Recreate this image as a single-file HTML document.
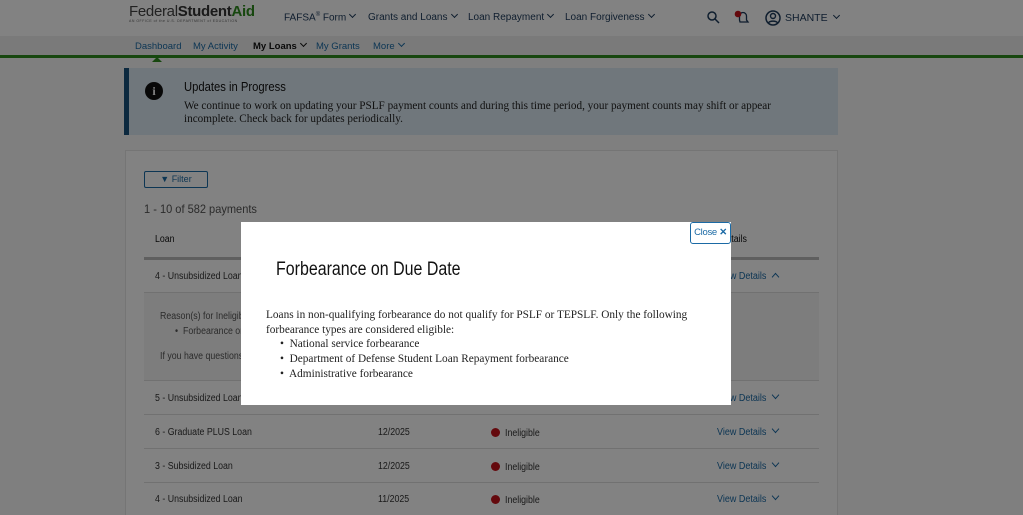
<!DOCTYPE html>
<html><head><meta charset="utf-8"><style>
*{margin:0;padding:0;box-sizing:border-box}
html,body{width:1023px;height:515px;overflow:hidden}
body{background:#fafafa;font-family:"Liberation Sans",sans-serif;position:relative;color:#222}
.abs{position:absolute;white-space:nowrap}
.hdr{position:absolute;left:0;top:0;width:1023px;height:36px;background:#fff}
.sub{position:absolute;left:0;top:36px;width:1023px;height:22px;background:#f0f0f0;border-bottom:3px solid #2e8b1e}
.nav{font-size:10px;color:#1d3a5a}
.sn{font-size:9.5px;color:#1b6aa5}
.cv{display:inline-block;width:5px;height:5px;border-right:1.3px solid currentColor;border-bottom:1.3px solid currentColor;transform:rotate(45deg);margin-left:4px;position:relative;top:-3px}
.cu{display:inline-block;width:6px;height:6px;border-left:1px solid currentColor;border-top:1px solid currentColor;transform:rotate(45deg);margin-left:7px;position:relative;top:1px}
.cd{display:inline-block;width:6px;height:6px;border-right:1px solid currentColor;border-bottom:1px solid currentColor;transform:rotate(45deg);margin-left:7px;position:relative;top:-3px}
.alert{position:absolute;left:124px;top:68px;width:714px;height:67px;background:#dce9f3;border-left:5px solid #19527d}
.card{position:absolute;left:125px;top:150px;width:713px;height:365px;background:#fff;border:1px solid #e6e6e6;border-bottom:none}
.t{font-size:10px;color:#333;transform:scaleX(.88);transform-origin:left}
.line{position:absolute;left:144px;width:675px;height:1px;background:#ddd}
.vd{font-size:10px;color:#1b6aa5;transform:scaleX(.9);transform-origin:left}
.dot{position:absolute;width:9px;height:9px;border-radius:50%;background:#c5121b}
.ov{position:absolute;left:0;top:0;width:1023px;height:515px;background:rgba(0,0,0,.49)}
.modal{position:absolute;left:241px;top:222px;width:490px;height:183px;background:#fff}
.serif{font-family:"Liberation Serif",serif;font-size:11.3px;color:#222}
</style></head><body>
<div class="hdr"></div>
<div class="abs" style="left:129px;top:3px;font-size:15px;color:#444;letter-spacing:-.3px">Federal<b style="color:#333">Student</b><b style="color:#2e8b1e">Aid</b></div>
<div class="abs" style="left:129px;top:19px;font-size:3.5px;color:#666;letter-spacing:.5px">AN OFFICE of the U.S. DEPARTMENT of EDUCATION</div>
<div class="abs nav" style="left:284px;top:12px">FAFSA<sup style="font-size:6px">®</sup> Form<span class="cv"></span></div>
<div class="abs nav" style="left:368px;top:12px">Grants and Loans<span class="cv"></span></div>
<div class="abs nav" style="left:468px;top:12px">Loan Repayment<span class="cv"></span></div>
<div class="abs nav" style="left:565px;top:12px">Loan Forgiveness<span class="cv"></span></div>
<svg class="abs" style="left:707px;top:11px" width="13" height="13" viewBox="0 0 13 13"><circle cx="5" cy="5" r="4" fill="none" stroke="#1d3a5a" stroke-width="1.5"/><path d="M8 8l4 4" stroke="#1d3a5a" stroke-width="1.5"/></svg>
<svg class="abs" style="left:734px;top:10px" width="16" height="15" viewBox="0 0 16 15"><path d="M6 12h8l-1.5-2V6a3.5 3.5 0 0 0-7 0v4z" fill="none" stroke="#1d3a5a" stroke-width="1.3"/><circle cx="4" cy="4" r="3.3" fill="#c5121b"/></svg>
<svg class="abs" style="left:765px;top:10px" width="16" height="16" viewBox="0 0 16 16"><circle cx="8" cy="8" r="7" fill="none" stroke="#1d3a5a" stroke-width="1.5"/><circle cx="8" cy="6" r="2.5" fill="none" stroke="#1d3a5a" stroke-width="1.4"/><path d="M3.5 13c1-2.5 8-2.5 9 0" fill="none" stroke="#1d3a5a" stroke-width="1.4"/></svg>
<div class="abs nav" style="left:785px;top:12px;font-size:10.5px">SHANTE<span class="cv" style="margin-left:6px"></span></div>
<div class="sub"></div>
<div class="abs sn" style="left:135px;top:41px">Dashboard</div>
<div class="abs sn" style="left:193px;top:41px">My Activity</div>
<div class="abs sn" style="left:253px;top:41px;color:#111;font-weight:bold">My Loans<span class="cv"></span></div>
<div class="abs sn" style="left:316px;top:41px">My Grants</div>
<div class="abs sn" style="left:373px;top:41px">More<span class="cv"></span></div>
<div class="abs" style="left:152px;top:52px;width:0;height:0;border:5px solid transparent;border-bottom-color:#2e8b1e"></div>
<div class="alert"></div>
<div class="abs" style="left:145px;top:82px;width:18px;height:18px;border-radius:50%;background:#111;color:#fff;font:bold 12px 'Liberation Serif',serif;text-align:center;line-height:18px">i</div>
<div class="abs" style="left:184px;top:80px;font-size:12.5px;color:#111;transform:scaleX(.9);transform-origin:left">Updates in Progress</div>
<div class="abs serif" style="left:184px;top:100px;line-height:13px;font-size:11.2px">We continue to work on updating your PSLF payment counts and during this time period, your payment counts may shift or appear<br>incomplete. Check back for updates periodically.</div>
<div class="card"></div>
<div class="abs" style="left:144px;top:171px;width:64px;height:17px;border:1px solid #1b6aa5;border-radius:2px;font-size:9px;color:#1b6aa5;text-align:center;line-height:15px">▼ Filter</div>
<div class="abs" style="left:144px;top:202px;font-size:12px;color:#555;transform:scaleX(.92);transform-origin:left">1 - 10 of 582 payments</div>
<div class="abs t" style="left:155px;top:234px;color:#111">Loan</div>
<div class="abs t" style="left:720px;top:234px;color:#111">Details</div>
<div class="abs" style="left:144px;top:257px;width:675px;height:3px;background:#bbb"></div>
<div class="abs t" style="left:155px;top:271px">4 - Unsubsidized Loan</div>
<div class="abs vd" style="left:717px;top:271px">View Details<span class="cu"></span></div>
<div class="line" style="top:292px"></div>
<div class="abs" style="left:144px;top:293px;width:675px;height:87px;background:#f5f5f5"></div>
<div class="abs t" style="left:160px;top:311px;color:#555">Reason(s) for Ineligibility</div>
<div class="abs t" style="left:175px;top:326px;color:#555">•&nbsp; Forbearance on Due Date</div>
<div class="abs t" style="left:160px;top:351px;color:#555">If you have questions</div>
<div class="line" style="top:380px"></div>
<div class="abs t" style="left:155px;top:393px">5 - Unsubsidized Loan</div>
<div class="abs vd" style="left:717px;top:393px">View Details<span class="cd"></span></div>
<div class="line" style="top:414px"></div>
<div class="abs t" style="left:155px;top:427px">6 - Graduate PLUS Loan</div>
<div class="abs t" style="left:378px;top:427px">12/2025</div>
<div class="dot" style="left:491px;top:428px"></div><div class="abs t" style="left:505px;top:428px">Ineligible</div>
<div class="abs vd" style="left:717px;top:427px">View Details<span class="cd"></span></div>
<div class="line" style="top:448px"></div>
<div class="abs t" style="left:155px;top:461px">3 - Subsidized Loan</div>
<div class="abs t" style="left:378px;top:461px">12/2025</div>
<div class="dot" style="left:491px;top:462px"></div><div class="abs t" style="left:505px;top:462px">Ineligible</div>
<div class="abs vd" style="left:717px;top:461px">View Details<span class="cd"></span></div>
<div class="line" style="top:482px"></div>
<div class="abs t" style="left:155px;top:494px">4 - Unsubsidized Loan</div>
<div class="abs t" style="left:378px;top:494px">11/2025</div>
<div class="dot" style="left:491px;top:495px"></div><div class="abs t" style="left:505px;top:495px">Ineligible</div>
<div class="abs vd" style="left:717px;top:494px">View Details<span class="cd"></span></div>
<div class="ov"></div>
<div class="modal"></div>
<div class="abs" style="left:690px;top:222px;width:41px;height:22px;border:1px solid #1b6aa5;border-radius:3px;background:#fff;font-size:9.5px;color:#1b6aa5;line-height:20px;text-align:center;letter-spacing:-.3px">Close <b>✕</b></div>
<div class="abs" style="left:276px;top:259px;font-size:19px;color:#111;transform:scaleX(.84);transform-origin:left">Forbearance on Due Date</div>
<div class="abs serif" style="left:266px;top:308px;line-height:14.8px">Loans in non-qualifying forbearance do not qualify for PSLF or TEPSLF. Only the following<br>forbearance types are considered eligible:</div>
<div class="abs serif" style="left:280px;top:337px;line-height:14.8px">•&nbsp; National service forbearance<br>•&nbsp; Department of Defense Student Loan Repayment forbearance<br>•&nbsp; Administrative forbearance</div>
</body></html>
